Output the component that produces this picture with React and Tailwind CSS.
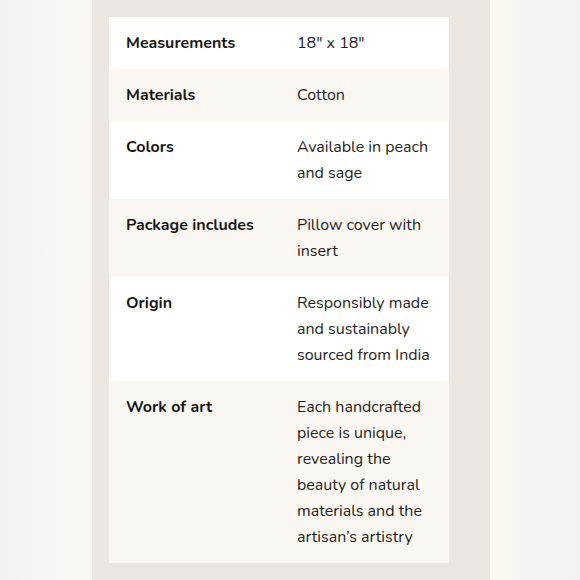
const rows = [
  ['Measurements', '18" x 18"'],
  ['Materials', 'Cotton'],
  ['Colors', 'Available in peach and sage'],
  ['Package includes', 'Pillow cover with insert'],
  ['Origin', 'Responsibly made and sustainably sourced from India'],
  ['Work of art', 'Each handcrafted piece is unique, revealing the beauty of natural materials and the artisan’s artistry'],
]

export default function App() {
  return (
    <div
      className="flex h-[580px] w-[580px] overflow-hidden bg-[#f6f4f1]"
      style={{ fontFamily: 'Nunito, Lato, "Noto Sans", sans-serif' }}
    >
      <div className="w-[68px] bg-gradient-to-r from-[#f4f2ef] to-[#f9f7f5]" />
      <div className="w-[24px] bg-[#faf6f1]" />
      <div className="w-[398px] bg-[#ebe6e1] pl-[17px] pr-[41px] pt-[17px]">
        <table className="w-[340px] border-collapse text-[16px] leading-[26px]">
          <tbody>
            {rows.map(([label, value], i) => (
              <tr key={label} className={i % 2 === 0 ? 'bg-white' : 'bg-[#faf6f1]'}>
                <td className="w-[171px] px-[17px] py-[13px] align-top font-bold text-[#161616]">{label}</td>
                <td className="px-[17px] py-[13px] align-top text-[#1e1e1e]">{value}</td>
              </tr>
            ))}
          </tbody>
        </table>
      </div>
      <div className="w-[23px] bg-[#faf6f0]" />
      <div className="flex-1 bg-gradient-to-r from-[#f7f5f2] to-[#f4f2ef]" />
    </div>
  )
}
